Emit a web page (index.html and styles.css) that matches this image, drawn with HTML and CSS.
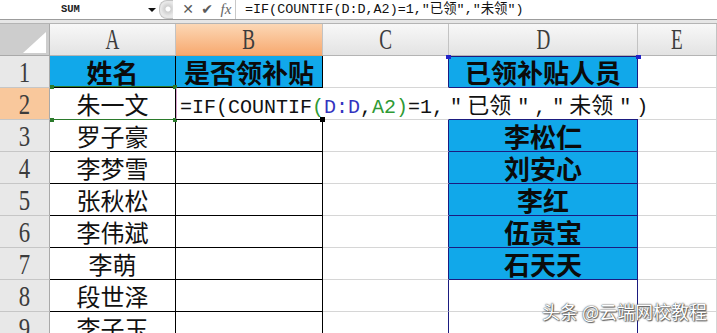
FILE: index.html
```html
<!DOCTYPE html>
<html lang="zh-CN">
<head>
    <meta charset="UTF-8">
    <title>COUNTIF</title>
    <link rel="stylesheet" href="styles.css">
</head>
<body>
<div class="app">
    <div class="formula-bar">
        <div class="name-box">SUM</div>
        <div class="tools">
            <span class="drop"></span>
            <span class="grip"></span>
            <span class="tool cancel">&#x2715;</span>
            <span class="tool ok">&#x2714;</span>
            <span class="tool fx">fx</span>
        </div>
        <div class="formula">=IF(COUNTIF(D:D,A2)=1,"已领","未领")</div>
    </div>
    <div class="band"></div>

    <div class="sheet">
        <div class="corner">
            <svg width="30" height="26" viewBox="0 0 30 26"><polygon points="4,24 27,24 27,3" fill="#fff"/></svg>
        </div>
        <div class="ch"><span>A</span></div>
        <div class="ch sel"><span>B</span></div>
        <div class="ch"><span>C</span></div>
        <div class="ch"><span>D</span></div>
        <div class="ch"><span>E</span></div>

        <div class="rh"><span>1</span></div>
        <div class="c ab blue head">姓名</div>
        <div class="c ab blue head">是否领补贴</div>
        <div class="c cl"></div>
        <div class="c dd blue head top">已领补贴人员
            <i class="mark tl"></i><i class="mark tr"></i>
        </div>
        <div class="c"></div>

        <div class="rh sel"><span>2</span></div>
        <div class="c ab ref">朱一文
            <i class="gm tl"></i><i class="gm tr"></i><i class="gm bl"></i><i class="gm br"></i>
        </div>
        <div class="c ab edit">
            <div class="editor">=IF(COUNTIF<span class="g">(</span><span class="b">D:D</span>,<span class="g">A2)</span>=1,<span class="q">"</span><span class="cjk">已领</span><span class="q">"</span>,<span class="q">"</span><span class="cjk">未领</span><span class="q">"</span>)</div>
            <i class="handle"></i>
        </div>
        <div class="c cl"></div>
        <div class="c dd"></div>
        <div class="c"></div>

        <div class="rh"><span>3</span></div>
        <div class="c ab">罗子豪</div>
        <div class="c ab"></div>
        <div class="c cl"></div>
        <div class="c dd blue head">李松仁</div>
        <div class="c"></div>

        <div class="rh"><span>4</span></div>
        <div class="c ab">李梦雪</div>
        <div class="c ab"></div>
        <div class="c cl"></div>
        <div class="c dd blue head">刘安心</div>
        <div class="c"></div>

        <div class="rh"><span>5</span></div>
        <div class="c ab">张秋松</div>
        <div class="c ab"></div>
        <div class="c cl"></div>
        <div class="c dd blue head">李红</div>
        <div class="c"></div>

        <div class="rh"><span>6</span></div>
        <div class="c ab">李伟斌</div>
        <div class="c ab"></div>
        <div class="c cl"></div>
        <div class="c dd blue head">伍贵宝</div>
        <div class="c"></div>

        <div class="rh"><span>7</span></div>
        <div class="c ab">李萌</div>
        <div class="c ab"></div>
        <div class="c cl"></div>
        <div class="c dd blue head">石天天</div>
        <div class="c"></div>

        <div class="rh"><span>8</span></div>
        <div class="c ab">段世泽</div>
        <div class="c ab"></div>
        <div class="c cl"></div>
        <div class="c dd plain"></div>
        <div class="c"></div>

        <div class="rh"><span>9</span></div>
        <div class="c ab">李子玉</div>
        <div class="c ab"></div>
        <div class="c cl"></div>
        <div class="c dd plain"></div>
        <div class="c"></div>
    </div>

    <div class="watermark">头条 @云端网校教程</div>
</div>
</body>
</html>
```

FILE: styles.css
```css
body {
    margin: 0;
    background: #fff;
}
.app {
    position: relative;
    width: 717px;
    height: 333px;
    overflow: hidden;
    background: #fff;
    font-family: "Noto Sans CJK SC", sans-serif;
}

/* formula bar */
.formula-bar {
    display: flex;
    height: 20px;
    border-bottom: 1px solid #9c9c9c;
    box-sizing: border-box;
}
.name-box {
    width: 143px;
    padding-left: 61px;
    box-sizing: border-box;
    font-family: "Liberation Mono", monospace;
    font-size: 10.5px;
    font-weight: 700;
    line-height: 19px;
    color: #222;
}
.tools {
    display: flex;
    align-items: center;
    width: 93px;
    border-right: 1px solid #c9c9c9;
    box-sizing: border-box;
}
.drop {
    width: 0;
    height: 0;
    margin-left: 5px;
    border-left: 4px solid transparent;
    border-right: 4px solid transparent;
    border-top: 4px solid #111;
}
.grip {
    width: 13px;
    height: 17px;
    margin-left: 3px;
    border-radius: 8px 0 0 8px;
    background: radial-gradient(circle at 8px 8px, #fff 0 2px, #cfcfcf 3px, #e8e8e8 7px);
    border: 1px solid #c4c4c4;
    border-right: none;
}
.tool {
    text-align: center;
    color: #5a5a5a;
    font-family: "DejaVu Sans", sans-serif;
    line-height: 19px;
}
.tool.cancel {
    width: 16px;
    margin-left: 7px;
    font-size: 14px;
}
.tool.ok {
    width: 18px;
    margin-left: 2px;
    font-size: 14px;
}
.tool.fx {
    width: 16px;
    margin-left: 2px;
    font-family: "Liberation Serif", serif;
    font-style: italic;
    font-size: 15px;
    color: #666;
}
.formula {
    padding-left: 9px;
    font-family: "Liberation Mono", "Noto Sans CJK SC", monospace;
    font-size: 13.4px;
    line-height: 19px;
    color: #111;
    white-space: nowrap;
}
.band {
    height: 3px;
    background: #e6e6e6;
    border-bottom: 1px solid #b4b4b4;
}

/* grid */
.sheet {
    display: grid;
    grid-template-columns: 50px 126px 147px 126px 189px 79px;
    grid-auto-rows: 32px;
}
.sheet > div {
    box-sizing: border-box;
    border-right: 1px solid #d6d6d6;
    border-bottom: 1px solid #d6d6d6;
}
.corner {
    display: flex;
    align-items: flex-end;
    justify-content: flex-end;
    background: #cdcdcd;
    border-right-color: #a9a9a9 !important;
    border-bottom-color: #a9a9a9 !important;
}
.ch {
    display: flex;
    align-items: center;
    justify-content: center;
    background: linear-gradient(#f8f8f8, #e3e3e3);
    border-right-color: #c3c3c3 !important;
    border-bottom-color: #b4b4b4 !important;
}
.ch.sel {
    background: linear-gradient(#fcd7b5, #f7a96f);
    border-bottom-color: #e59a5e !important;
}
.ch span,
.rh span {
    display: inline-block;
    font-family: "Liberation Serif", serif;
    color: #3c3c3c;
}
.ch span {
    font-size: 29px;
    transform: scaleX(0.66);
}
.rh {
    display: flex;
    align-items: center;
    justify-content: center;
    background: #e8e8e8;
    border-right-color: #a9a9a9 !important;
    border-bottom-color: #c6c6c6 !important;
}
.rh.sel {
    background: #f9c89c;
}
.rh span {
    font-size: 30px;
    line-height: 30px;
    transform: scaleX(0.76);
}

.c {
    display: flex;
    align-items: center;
    justify-content: center;
    font-size: 24px;
    line-height: 30px;
    color: #111;
    white-space: nowrap;
}
.c.ab {
    border-right-color: #000;
    border-bottom-color: #000;
}
.blue {
    background: #11a8ea;
}
.head {
    font-weight: 700;
    font-size: 26px;
    color: #0b0b0b;
}
.c.cl {
    border-right-color: #1b1b80;
}
.c.dd {
    position: relative;
    border-right-color: #1b1b80;
    border-bottom-color: #1b1b80;
}
.c.dd.plain {
    border-bottom-color: #d6d6d6;
}
.c.dd.top {
    box-shadow: inset 0 1px 0 #1b1b80;
}
.mark {
    position: absolute;
    top: -1px;
    width: 5px;
    height: 4px;
    background: #2323c8;
}
.mark.tl { left: -3px; }
.mark.tr { right: -4px; }

/* A2 reference box */
.ref {
    position: relative;
}
.ref::before {
    content: "";
    position: absolute;
    top: -2px;
    left: 0;
    right: -1px;
    bottom: -1px;
    border: 1px solid #2b7a2b;
    border-left-color: transparent;
    border-right-color: transparent;
}
.gm {
    position: absolute;
    width: 4px;
    height: 4px;
    background: #2b7a2b;
}
.gm.tl { top: -3px; left: 0; }
.gm.tr { top: -3px; right: -2px; }
.gm.bl { bottom: -3px; left: 0; }
.gm.br { bottom: -3px; right: -2px; }

/* cell editor in B2 */
.edit {
    position: relative;
}
.editor {
    position: absolute;
    top: 0;
    left: 0;
    height: 31px;
    padding: 0 6px 0 3px;
    z-index: 2;
    background: #fff;
    border-left: 1px solid #d9a3cf;
    font-family: "Liberation Mono", monospace;
    font-size: 20px;
    line-height: 31px;
    color: #111;
    white-space: nowrap;
}
.editor .g { color: #2f9a35; }
.editor .b { color: #3434c0; }
.editor .cjk {
    font-family: "Noto Sans CJK SC", sans-serif;
    font-size: 22px;
}
.editor .q {
    margin: 0 5px 0 6px;
}
.handle {
    position: absolute;
    right: -3px;
    bottom: -3px;
    width: 5px;
    height: 5px;
    z-index: 3;
    background: #000;
}

.watermark {
    position: absolute;
    right: 10px;
    top: 299px;
    font-size: 18px;
    line-height: 24px;
    color: #fff;
    text-shadow: 0 0 1px #444, 0 0 2px #555, 1px 1px 1px #666;
}
```
